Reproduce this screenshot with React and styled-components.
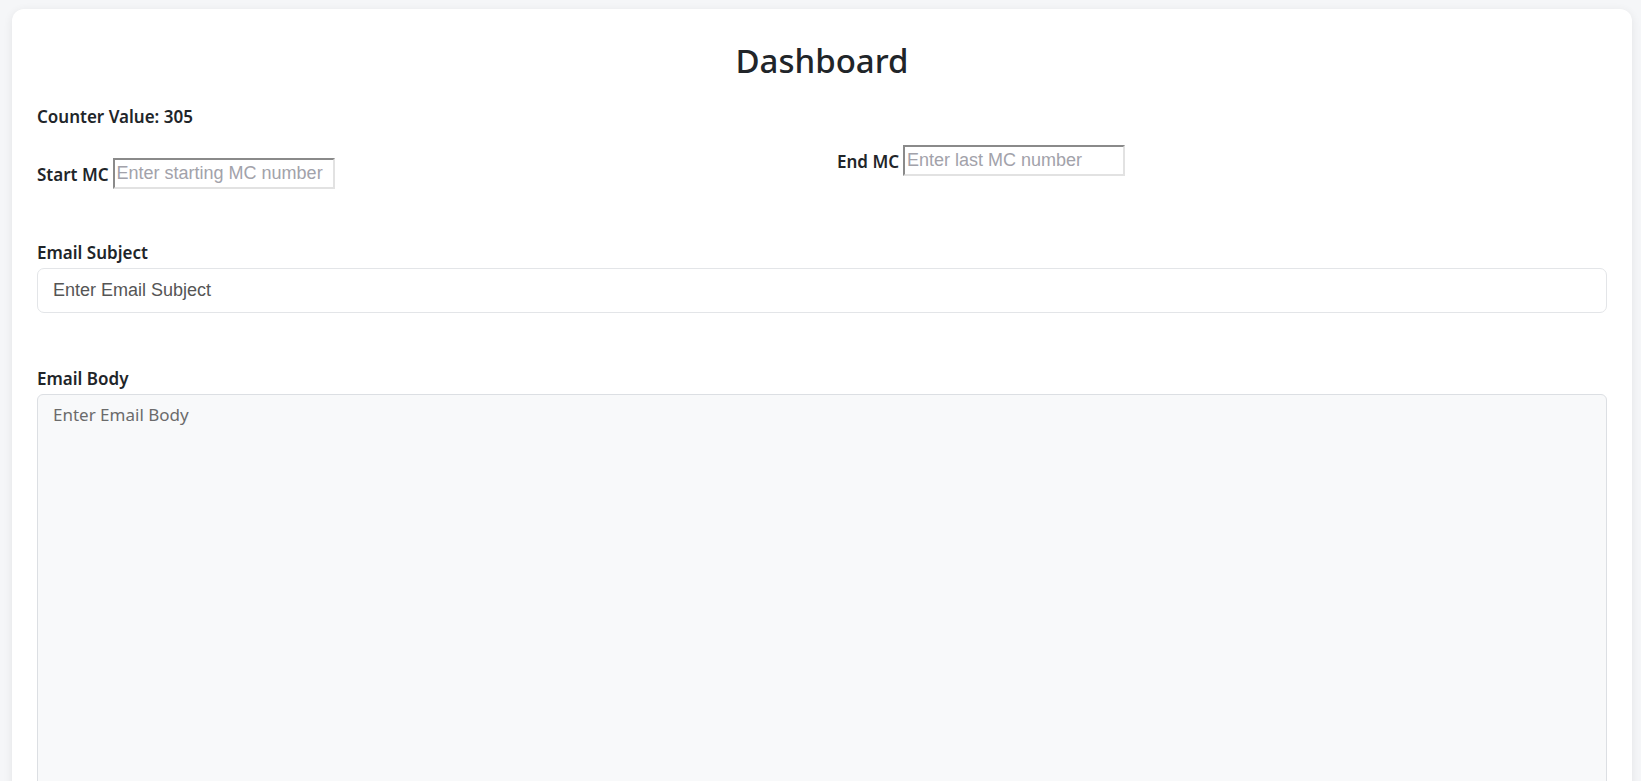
import React, { useState } from 'react';
import styled, { createGlobalStyle } from 'styled-components';

const GlobalStyle = createGlobalStyle`
  body {
    margin: 0;
    background: #f5f6f8;
    font-family: "Noto Sans", "Liberation Sans", sans-serif;
    color: #212529;
  }
`;

const Page = styled.div`
  padding: 9px 9px 0 12px;
`;

const Card = styled.div`
  background: #ffffff;
  border-radius: 12px;
  box-shadow: 0 2px 10px rgba(0, 0, 0, 0.08);
  padding: 25px 25px 40px;
`;

const Title = styled.h1`
  margin: 6px 0 0;
  text-align: center;
  font-size: 33px;
  font-weight: 500;
  line-height: 42px;
  color: #212529;
`;

const Counter = styled.p`
  margin: 23px 0 0;
  font-size: 17px;
  font-weight: 600;
  line-height: 24px;
`;

const RangeRow = styled.div`
  display: grid;
  grid-template-columns: 1fr 1fr;
  column-gap: 30px;
  align-items: start;
  margin-top: 16px;
`;

const RangeField = styled.div`
  display: flex;
  align-items: flex-end;
  margin-top: ${(p) => p.$offset}px;
`;

const RangeLabel = styled.label`
  font-size: 17px;
  font-weight: 600;
  line-height: 24px;
  margin-right: 4px;
  padding-bottom: 2px;
`;

const NumberInput = styled.input`
  box-sizing: border-box;
  width: 222px;
  height: 31px;
  padding: 1px 2px;
  font-family: Arial, "Liberation Sans", sans-serif;
  font-size: 18px;
  color: #212529;
  background: #fff;
  border-style: solid;
  border-width: 2px;
  border-color: #8a8a8a #e2e2e2 #e2e2e2 #8a8a8a;
  outline: none;

  &::placeholder {
    color: #a2a2aa;
  }
`;

const Group = styled.div`
  margin-top: ${(p) => p.$top}px;
`;

const FieldLabel = styled.label`
  display: block;
  font-size: 17px;
  font-weight: 600;
  line-height: 24px;
  margin-bottom: 3px;
`;

const SubjectInput = styled.input`
  box-sizing: border-box;
  width: 100%;
  height: 45px;
  padding: 0 15px;
  font-family: Arial, "Liberation Sans", sans-serif;
  font-size: 18px;
  color: #212529;
  background: #fff;
  border: 1px solid #e3e5e8;
  border-radius: 7px;
  outline: none;

  &::placeholder {
    color: #555;
  }
`;

const BodyArea = styled.textarea`
  box-sizing: border-box;
  display: block;
  width: 100%;
  height: 460px;
  padding: 8px 15px;
  font-family: "Noto Sans", sans-serif;
  font-size: 17px;
  line-height: 24px;
  color: #212529;
  background: #f8f9fa;
  border: 1px solid #dcdfe3;
  border-radius: 6px;
  resize: vertical;
  outline: none;

  &::placeholder {
    color: #6b6b6b;
  }
`;

export default function App() {
  const [start, setStart] = useState('');
  const [end, setEnd] = useState('');
  const [subject, setSubject] = useState('');
  const [body, setBody] = useState('');

  return (
    <Page>
      <GlobalStyle />
      <Card>
        <Title>Dashboard</Title>
        <Counter>Counter Value: 305</Counter>
        <RangeRow>
          <RangeField $offset={13}>
            <RangeLabel>Start MC</RangeLabel>
            <NumberInput
              type="text"
              placeholder="Enter starting MC number"
              value={start}
              onChange={(e) => setStart(e.target.value)}
            />
          </RangeField>
          <RangeField $offset={0}>
            <RangeLabel>End MC</RangeLabel>
            <NumberInput
              type="text"
              placeholder="Enter last MC number"
              value={end}
              onChange={(e) => setEnd(e.target.value)}
            />
          </RangeField>
        </RangeRow>
        <Group $top={52}>
          <FieldLabel>Email Subject</FieldLabel>
          <SubjectInput
            placeholder="Enter Email Subject"
            value={subject}
            onChange={(e) => setSubject(e.target.value)}
          />
        </Group>
        <Group $top={54}>
          <FieldLabel>Email Body</FieldLabel>
          <BodyArea
            placeholder="Enter Email Body"
            value={body}
            onChange={(e) => setBody(e.target.value)}
          />
        </Group>
      </Card>
    </Page>
  );
}
